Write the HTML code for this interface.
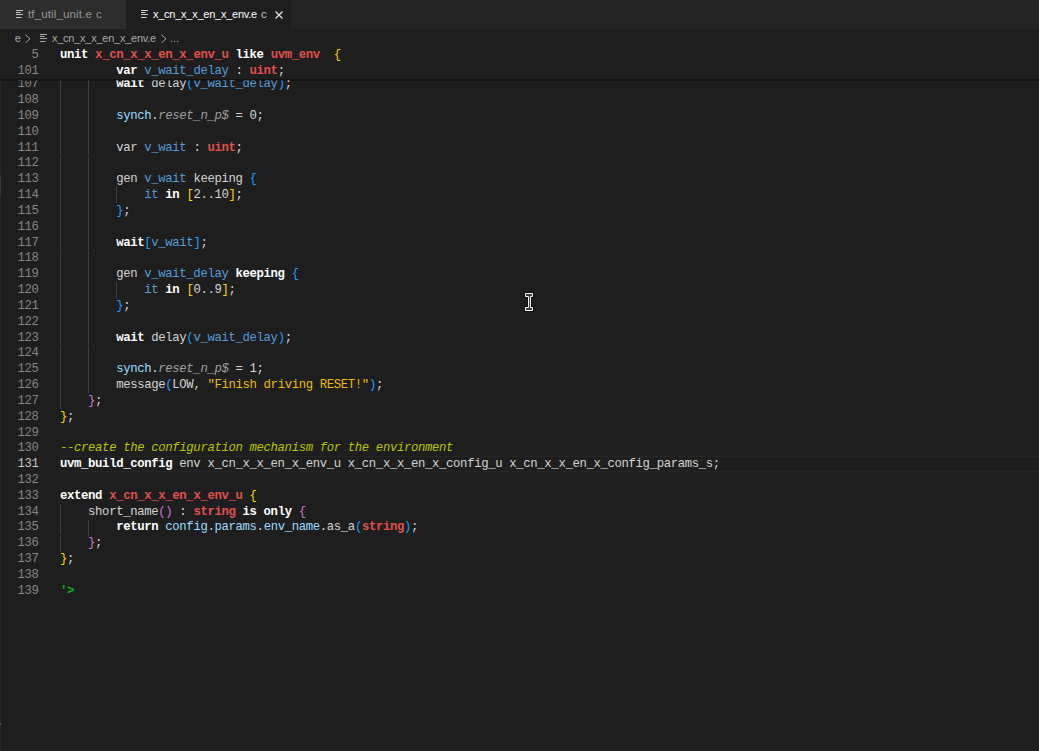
<!DOCTYPE html>
<html><head><meta charset="utf-8">
<style>
html,body{margin:0;padding:0;}
body{width:1039px;height:751px;overflow:hidden;background:#1e1e1e;position:relative;font-family:"Liberation Sans",sans-serif;}
.tabs{position:absolute;left:0;top:0;width:1039px;height:28.5px;background:#252526;}
.tab{position:absolute;top:0;height:28.5px;}
.tab span,.crumbs span{position:absolute;white-space:pre;line-height:12px;}
.t1{left:0;width:126px;background:#2d2d2d;}
.t2{left:126px;width:165px;background:#1e1e1e;}
.crumbs{position:absolute;left:0;top:28.5px;width:1039px;height:18.9px;background:#1e1e1e;}
.ico{position:absolute;}
.code{font-family:"Liberation Mono",monospace;font-size:12.3px;letter-spacing:-0.36px;line-height:15.8333px;color:#d4d4d4;}
.lines{position:absolute;left:0;top:77.3px;width:1039px;}
.ln{position:relative;height:15.8333px;}
.num{position:absolute;left:0;width:38.5px;text-align:right;color:#858585;transform:scaleY(1.1);transform-origin:0 11px;}
.txt{position:absolute;left:60px;white-space:pre;transform:scaleY(1.07);transform-origin:0 11px;}
.sticky{position:absolute;z-index:5;left:0;top:47.4px;width:1039px;height:31.6px;overflow:hidden;background:#1e1e1e;}
.sticky .ln{top:0.3px}
.shadow{position:absolute;z-index:6;left:0;top:79px;width:1039px;height:1px;background:#121212;box-shadow:0 1px 0 rgba(0,0,0,0.3);}
.k{color:#ffffff;font-weight:bold;}
.v{color:#9cdcfe;}
.r{color:#e0504c;font-weight:bold;}
.b{color:#569cd6;}
.g{color:#ffd700;}
.o{color:#da70d6;}
.bl{color:#179fff;}
.it{color:#a0a0a0;font-style:italic;}
.s{color:#ecbd00;}
.c{color:#b5c400;font-style:italic;}
.gr{color:#0cb40c;font-weight:bold;}
.guide{position:absolute;width:1px;background:#404040;}
.cur{position:absolute;left:60px;width:979px;height:1px;background:#252525;}
</style></head><body>
<div class="tabs">
  <div class="tab t1">
    <svg class="ico" style="left:15px;top:9px" width="10" height="10"><g fill="#c5c5c5"><rect x="1" y="1" width="7" height="1"/><rect x="1" y="3" width="4.5" height="1"/><rect x="1" y="5" width="7" height="1"/><rect x="1" y="8" width="5.5" height="1"/></g></svg>
    <span style="left:28px;top:8px;font-size:11.5px;letter-spacing:0.14px;color:#969696">tf_util_unit.e</span>
    <span style="left:96px;top:8px;font-size:11.5px;color:#8c8c8c">c</span>
  </div>
  <div class="tab t2">
    <svg class="ico" style="left:14px;top:9px" width="10" height="10"><g fill="#d0d0d0"><rect x="1" y="1" width="7" height="1"/><rect x="1" y="3" width="4.5" height="1"/><rect x="1" y="5" width="7" height="1"/><rect x="1" y="8" width="5.5" height="1"/></g></svg>
    <span style="left:27px;top:8px;font-size:11px;letter-spacing:-0.25px;color:#ffffff">x_cn_x_x_en_x_env.e</span>
    <span style="left:135px;top:8px;font-size:11.5px;color:#c0c0c0">c</span>
    <svg class="ico" style="left:148px;top:9.5px" width="10" height="10"><path d="M1.5 1.5 L8.5 8.5 M8.5 1.5 L1.5 8.5" stroke="#e8e8e8" stroke-width="1.2"/></svg>
  </div>
</div>
<div class="crumbs">
  <span style="left:14.8px;top:3px;font-size:11px;color:#a9a9a9">e</span>
  <svg class="ico" style="left:24px;top:5px" width="8" height="10"><path d="M1.5 0.8 L6 4.8 L1.5 8.8" stroke="#a9a9a9" stroke-width="1" fill="none"/></svg>
  <svg class="ico" style="left:39px;top:4.5px" width="10" height="10"><g fill="#a8a8a8"><rect x="1" y="1" width="7" height="1"/><rect x="1" y="3" width="4.5" height="1"/><rect x="1" y="5" width="7" height="1"/><rect x="1" y="8" width="5.5" height="1"/></g></svg>
  <span style="left:52px;top:3px;font-size:11px;letter-spacing:-0.25px;color:#a9a9a9">x_cn_x_x_en_x_env.e</span>
  <svg class="ico" style="left:160px;top:5px" width="8" height="10"><path d="M1.5 0.8 L6 4.8 L1.5 8.8" stroke="#a9a9a9" stroke-width="1" fill="none"/></svg>
  <span style="left:170px;top:3px;font-size:11px;color:#a9a9a9">...</span>
</div>

<div class="cur" style="top:456px"></div><div style="position:absolute;left:60px;top:456px;width:1px;height:16px;background:#252525"></div>
<div class="cur" style="top:471px"></div>
<div class="lines code">
<div class="ln"><span class="num">107</span><span class="txt">        <span class="k">wait</span> delay<span class="bl">(</span><span class="b">v_wait_delay</span><span class="bl">)</span>;</span></div>
<div class="ln"><span class="num">108</span></div>
<div class="ln"><span class="num">109</span><span class="txt">        <span class="v">synch</span>.<span class="it">reset_n_p$</span> = 0;</span></div>
<div class="ln"><span class="num">110</span></div>
<div class="ln"><span class="num">111</span><span class="txt">        var <span class="b">v_wait</span> : <span class="r">uint</span>;</span></div>
<div class="ln"><span class="num">112</span></div>
<div class="ln"><span class="num">113</span><span class="txt">        gen <span class="b">v_wait</span> keeping <span class="bl">{</span></span></div>
<div class="ln"><span class="num">114</span><span class="txt">            <span class="b">it</span> <span class="k">in</span> <span class="g">[</span>2..10<span class="g">]</span>;</span></div>
<div class="ln"><span class="num">115</span><span class="txt">        <span class="bl">}</span>;</span></div>
<div class="ln"><span class="num">116</span></div>
<div class="ln"><span class="num">117</span><span class="txt">        <span class="k">wait</span><span class="bl">[</span><span class="b">v_wait</span><span class="bl">]</span>;</span></div>
<div class="ln"><span class="num">118</span></div>
<div class="ln"><span class="num">119</span><span class="txt">        gen <span class="b">v_wait_delay</span> <span class="k">keeping</span> <span class="bl">{</span></span></div>
<div class="ln"><span class="num">120</span><span class="txt">            <span class="b">it</span> <span class="k">in</span> <span class="g">[</span>0..9<span class="g">]</span>;</span></div>
<div class="ln"><span class="num">121</span><span class="txt">        <span class="bl">}</span>;</span></div>
<div class="ln"><span class="num">122</span></div>
<div class="ln"><span class="num">123</span><span class="txt">        <span class="k">wait</span> delay<span class="bl">(</span><span class="b">v_wait_delay</span><span class="bl">)</span>;</span></div>
<div class="ln"><span class="num">124</span></div>
<div class="ln"><span class="num">125</span><span class="txt">        <span class="v">synch</span>.<span class="it">reset_n_p$</span> = 1;</span></div>
<div class="ln"><span class="num">126</span><span class="txt">        message<span class="bl">(</span>LOW, <span class="s">"Finish driving RESET!"</span><span class="bl">)</span>;</span></div>
<div class="ln"><span class="num">127</span><span class="txt">    <span class="o">}</span>;</span></div>
<div class="ln"><span class="num">128</span><span class="txt"><span class="g">}</span>;</span></div>
<div class="ln"><span class="num">129</span></div>
<div class="ln"><span class="num">130</span><span class="txt"><span class="c">--create the configuration mechanism for the environment</span></span></div>
<div class="ln"><span class="num" style="color:#c6c6c6">131</span><span class="txt"><span class="k">uvm_build_config</span> env x_cn_x_x_en_x_env_u x_cn_x_x_en_x_config_u x_cn_x_x_en_x_config_params_s;</span></div>
<div class="ln"><span class="num">132</span></div>
<div class="ln"><span class="num">133</span><span class="txt"><span class="k">extend</span> <span class="r">x_cn_x_x_en_x_env_u</span> <span class="g">{</span></span></div>
<div class="ln"><span class="num">134</span><span class="txt">    short_name<span class="o">()</span> : <span class="r">string</span> <span class="k">is only</span> <span class="o">{</span></span></div>
<div class="ln"><span class="num">135</span><span class="txt">        <span class="k">return</span> <span class="v">config</span>.<span class="v">params</span>.<span class="v">env_name</span>.as_a<span class="bl">(</span><span class="r">string</span><span class="bl">)</span>;</span></div>
<div class="ln"><span class="num">136</span><span class="txt">    <span class="o">}</span>;</span></div>
<div class="ln"><span class="num">137</span><span class="txt"><span class="g">}</span>;</span></div>
<div class="ln"><span class="num">138</span></div>
<div class="ln"><span class="num">139</span><span class="txt"><span class="gr">'&gt;</span></span></div>
</div>

<div class="sticky code">
<div class="ln"><span class="num">5</span><span class="txt"><span class="k">unit</span> <span class="r">x_cn_x_x_en_x_env_u</span> <span class="k">like</span> <span class="r">uvm_env</span>  <span class="g">{</span></span></div>
<div class="ln"><span class="num">101</span><span class="txt">        <span class="k">var</span> <span class="b">v_wait_delay</span> : <span class="r">uint</span>;</span></div>
</div>
<div class="guide" style="left:60px;top:76.50px;height:332.50px"></div>
<div class="guide" style="left:88px;top:76.50px;height:316.67px"></div>
<div class="guide" style="left:116px;top:187.33px;height:15.83px"></div>
<div class="guide" style="left:116px;top:282.33px;height:15.83px"></div>
<div class="guide" style="left:60px;top:504.00px;height:47.50px"></div>
<div class="guide" style="left:88px;top:519.83px;height:15.83px"></div>
<div style="position:absolute;left:60px;top:155px;width:1px;height:1px;background:#1e1e1e"></div><div style="position:absolute;left:88px;top:155px;width:1px;height:1px;background:#1e1e1e"></div>
<div style="position:absolute;left:60px;top:250px;width:1px;height:1px;background:#1e1e1e"></div><div style="position:absolute;left:88px;top:250px;width:1px;height:1px;background:#1e1e1e"></div>
<div style="position:absolute;left:60px;top:345px;width:1px;height:1px;background:#1e1e1e"></div><div style="position:absolute;left:88px;top:345px;width:1px;height:1px;background:#1e1e1e"></div>
<div style="position:absolute;left:60px;top:535px;width:1px;height:1px;background:#1e1e1e"></div>
<div class="shadow"></div>
<svg style="position:absolute;z-index:9;left:523.7px;top:292px" width="11" height="21" viewBox="0 0 11 21"><path d="M1.5 1.5 H8.5 V4.5 H6.5 V15.5 H8.5 V18.5 H1.5 V15.5 H4.5 V4.5 H1.5 Z" fill="#3c3c3c" stroke="#000" stroke-width="2" stroke-linejoin="miter"/><path d="M1.5 1.5 H8.5 V4.5 H6.5 V15.5 H8.5 V18.5 H1.5 V15.5 H4.5 V4.5 H1.5 Z" fill="#3c3c3c" stroke="#fff" stroke-width="1"/></svg>
<div style="position:absolute;left:0;top:47px;width:1px;height:704px;background:#262626"></div>
<div style="position:absolute;left:0;top:175px;width:1px;height:19px;background:#383838"></div>
<div style="position:absolute;left:0;top:723px;width:1px;height:2px;background:#555"></div>
</body></html>
